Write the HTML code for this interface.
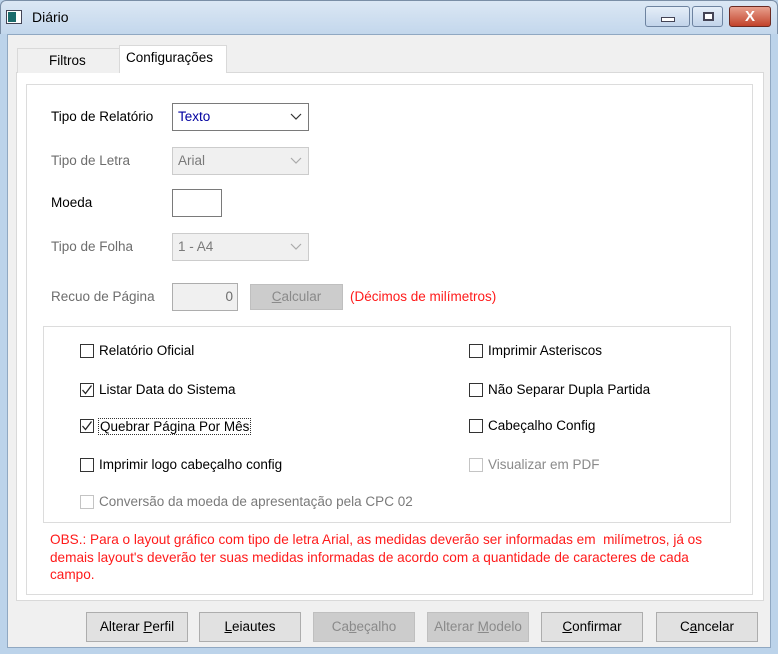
<!DOCTYPE html>
<html><head><meta charset="utf-8"><style>
*{box-sizing:border-box;margin:0;padding:0}
body{width:778px;height:654px;overflow:hidden;font-family:"Liberation Sans",sans-serif;font-size:13.5px;color:#000;background:#bcd3ea;position:relative}
.a{position:absolute}
.title{left:0;top:0;width:778px;height:34px;background:linear-gradient(#dbe7f4,#c3d7ec);border:1px solid #7a8ea6;border-bottom:none;border-radius:6px 6px 0 0}
.client{left:7px;top:34px;width:764px;height:614px;background:#f0f0f0;border:1px solid #90a8c2}
.btn{position:absolute;top:612px;width:102px;height:30px;background:#e1e1e1;border:1px solid #adadad;text-align:center;line-height:28px;font-size:13.5px}
.dis{color:#8a8a8a;background:#cccccc;border-color:#bfbfbf}
.cb{position:absolute;width:14px;height:14px;border:1px solid #333;background:#fff}
.cb.d{border-color:#c4c4c4}
.lbl{position:absolute;white-space:nowrap}
.gray{color:#6d6d6d}
.combo{position:absolute;width:137px;height:28px;border:1px solid #7a7a7a;background:#fff;padding:5px 0 0 5px}
.combo.d{border-color:#cccccc;background:#f0f0f0;color:#7a7a7a}
.chev{position:absolute;right:6px;top:6px}
.tb{position:absolute;top:6px;height:21px;border:1px solid #6d83a0;border-radius:3px;background:linear-gradient(#e5eef8,#c2d4ea)}
</style></head><body>
<div class="a title"></div>
<div class="a" style="left:6px;top:10px;width:16px;height:14px;background:#fff;border:1px solid #445"><div style="position:absolute;left:1px;top:1px;width:8px;height:10px;background:#1b6b6b"></div></div>
<div class="lbl" style="left:32px;top:9px;font-size:14px">Diário</div>
<div class="tb" style="left:645px;width:45px"><div style="position:absolute;left:15px;top:10px;width:14px;height:5px;border:1px solid #445;background:#fff"></div></div>
<div class="tb" style="left:692px;width:31px"><div style="position:absolute;left:10px;top:5px;width:11px;height:9px;border:2px solid #445;background:#fff"></div></div>
<div class="a" style="left:729px;top:6px;width:42px;height:21px;border:1px solid #6b2a22;border-radius:3px;background:linear-gradient(#e8a08e,#c2432b);color:#fff;font-weight:bold;text-align:center;line-height:19px;font-size:15px">X</div>
<div class="a client"></div>
<div class="a" style="left:16px;top:72px;width:748px;height:529px;background:#fff;border:1px solid #d9d9d9"></div>
<div class="a" style="left:17px;top:48px;width:103px;height:25px;background:#f0f0f0;border:1px solid #d9d9d9;border-bottom:none"></div>
<div class="lbl" style="left:49px;top:53px">Filtros</div>
<div class="a" style="left:119px;top:45px;width:108px;height:28px;background:#fff;border:1px solid #d9d9d9;border-bottom:none"></div>
<div class="lbl" style="left:126px;top:50px">Configurações</div>
<div class="a" style="left:26px;top:84px;width:727px;height:511px;border:1px solid #dcdcdc"></div>

<div class="lbl" style="left:51px;top:109px">Tipo de Relatório</div>
<div class="combo" style="left:172px;top:103px;color:#0000a0">Texto<svg class="chev" width="12" height="12" viewBox="0 0 12 12"><path d="M1 4l5 5 5-5" fill="none" stroke="#333" stroke-width="1.2"/></svg></div>
<div class="lbl gray" style="left:51px;top:153px">Tipo de Letra</div>
<div class="combo d" style="left:172px;top:147px">Arial<svg class="chev" width="12" height="12" viewBox="0 0 12 12"><path d="M1 4l5 5 5-5" fill="none" stroke="#aaa" stroke-width="1.2"/></svg></div>
<div class="lbl" style="left:51px;top:195px">Moeda</div>
<div class="a" style="left:172px;top:189px;width:50px;height:28px;border:1px solid #7a7a7a;background:#fff"></div>
<div class="lbl gray" style="left:51px;top:239px">Tipo de Folha</div>
<div class="combo d" style="left:172px;top:233px">1 - A4<svg class="chev" width="12" height="12" viewBox="0 0 12 12"><path d="M1 4l5 5 5-5" fill="none" stroke="#aaa" stroke-width="1.2"/></svg></div>
<div class="lbl gray" style="left:51px;top:289px">Recuo de Página</div>
<div class="a" style="left:172px;top:283px;width:66px;height:28px;border:1px solid #adadad;background:#f0f0f0;text-align:right;padding:5px 4px 0 0;color:#6d6d6d">0</div>
<div class="a" style="left:250px;top:284px;width:93px;height:26px;background:#cccccc;border:1px solid #bfbfbf;color:#8a8a8a;text-align:center;line-height:24px"><u>C</u>alcular</div>
<div class="lbl" style="left:350px;top:289px;color:#ff1a1a">(Décimos de milímetros)</div>

<div class="a" style="left:43px;top:326px;width:688px;height:197px;border:1px solid #dcdcdc"></div>
<div class="cb" style="left:80px;top:344px"></div><div class="lbl" style="left:99px;top:343px">Relatório Oficial</div>
<div class="cb" style="left:80px;top:383px"><svg width="12" height="12" viewBox="0 0 12 12" style="position:absolute;left:0;top:0"><path d="M1.5 6l3 3.5 6-8" fill="none" stroke="#222" stroke-width="1.3"/></svg></div><div class="lbl" style="left:99px;top:382px">Listar Data do Sistema</div>
<div class="cb" style="left:80px;top:419px"><svg width="12" height="12" viewBox="0 0 12 12" style="position:absolute;left:0;top:0"><path d="M1.5 6l3 3.5 6-8" fill="none" stroke="#222" stroke-width="1.3"/></svg></div><div class="lbl" style="left:98px;top:418px;border:1px dotted #333;padding:0 1px">Quebrar Página Por Mês</div>
<div class="cb" style="left:80px;top:458px"></div><div class="lbl" style="left:99px;top:457px">Imprimir logo cabeçalho config</div>
<div class="cb d" style="left:80px;top:495px"></div><div class="lbl gray" style="left:99px;top:494px;color:#7a7a7a">Conversão da moeda de apresentação pela CPC 02</div>
<div class="cb" style="left:469px;top:344px"></div><div class="lbl" style="left:488px;top:343px">Imprimir Asteriscos</div>
<div class="cb" style="left:469px;top:383px"></div><div class="lbl" style="left:488px;top:382px">Não Separar Dupla Partida</div>
<div class="cb" style="left:469px;top:419px"></div><div class="lbl" style="left:488px;top:418px">Cabeçalho Config</div>
<div class="cb d" style="left:469px;top:458px"></div><div class="lbl" style="left:488px;top:457px;color:#8a8a8a">Visualizar em PDF</div>

<div class="a" style="left:50px;top:531px;width:680px;color:#ff1a1a;font-size:13.6px;line-height:17.5px">OBS.: Para o layout gráfico com tipo de letra Arial, as medidas deverão ser informadas em&nbsp; milímetros, já os<br>demais layout's deverão ter suas medidas informadas de acordo com a quantidade de caracteres de cada<br>campo.</div>

<div class="btn" style="left:86px">Alterar <u>P</u>erfil</div>
<div class="btn" style="left:199px"><u>L</u>eiautes</div>
<div class="btn dis" style="left:313px">Ca<u>b</u>eçalho</div>
<div class="btn dis" style="left:427px">Alterar <u>M</u>odelo</div>
<div class="btn" style="left:541px"><u>C</u>onfirmar</div>
<div class="btn" style="left:656px">C<u>a</u>ncelar</div>
</body></html>
